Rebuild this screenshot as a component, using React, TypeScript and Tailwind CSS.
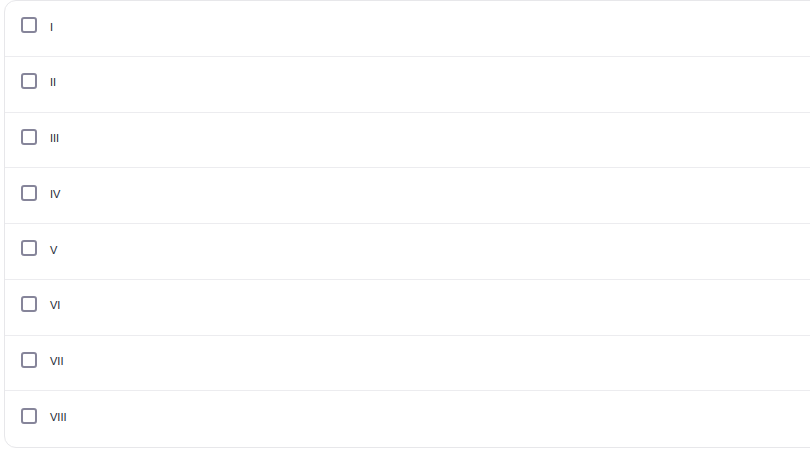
import React from 'react';

const items = ['I', 'II', 'III', 'IV', 'V', 'VI', 'VII', 'VIII'];

export default function App() {
  return (
    <div className="w-[810px] h-[453px] overflow-hidden bg-white" style={{ fontFamily: '"Liberation Sans", Arial, sans-serif' }}>
      <div className="ml-[4px] w-[830px] border border-[#e7e7ea] rounded-[12px] bg-white">
        {items.map((label, i) => (
          <div
            key={label}
            className={`h-[55.75px] flex items-center gap-[13px] pl-[16px] pb-[6px] ${i < items.length - 1 ? 'border-b border-[#ececef]' : ''}`}
          >
            <span className="w-[16px] h-[16px] rounded-[3px] border-2 border-[#86859a] bg-white" />
            <span className="mt-[3px] text-[11px] text-[#1a1f33]">{label}</span>
          </div>
        ))}
      </div>
    </div>
  );
}
